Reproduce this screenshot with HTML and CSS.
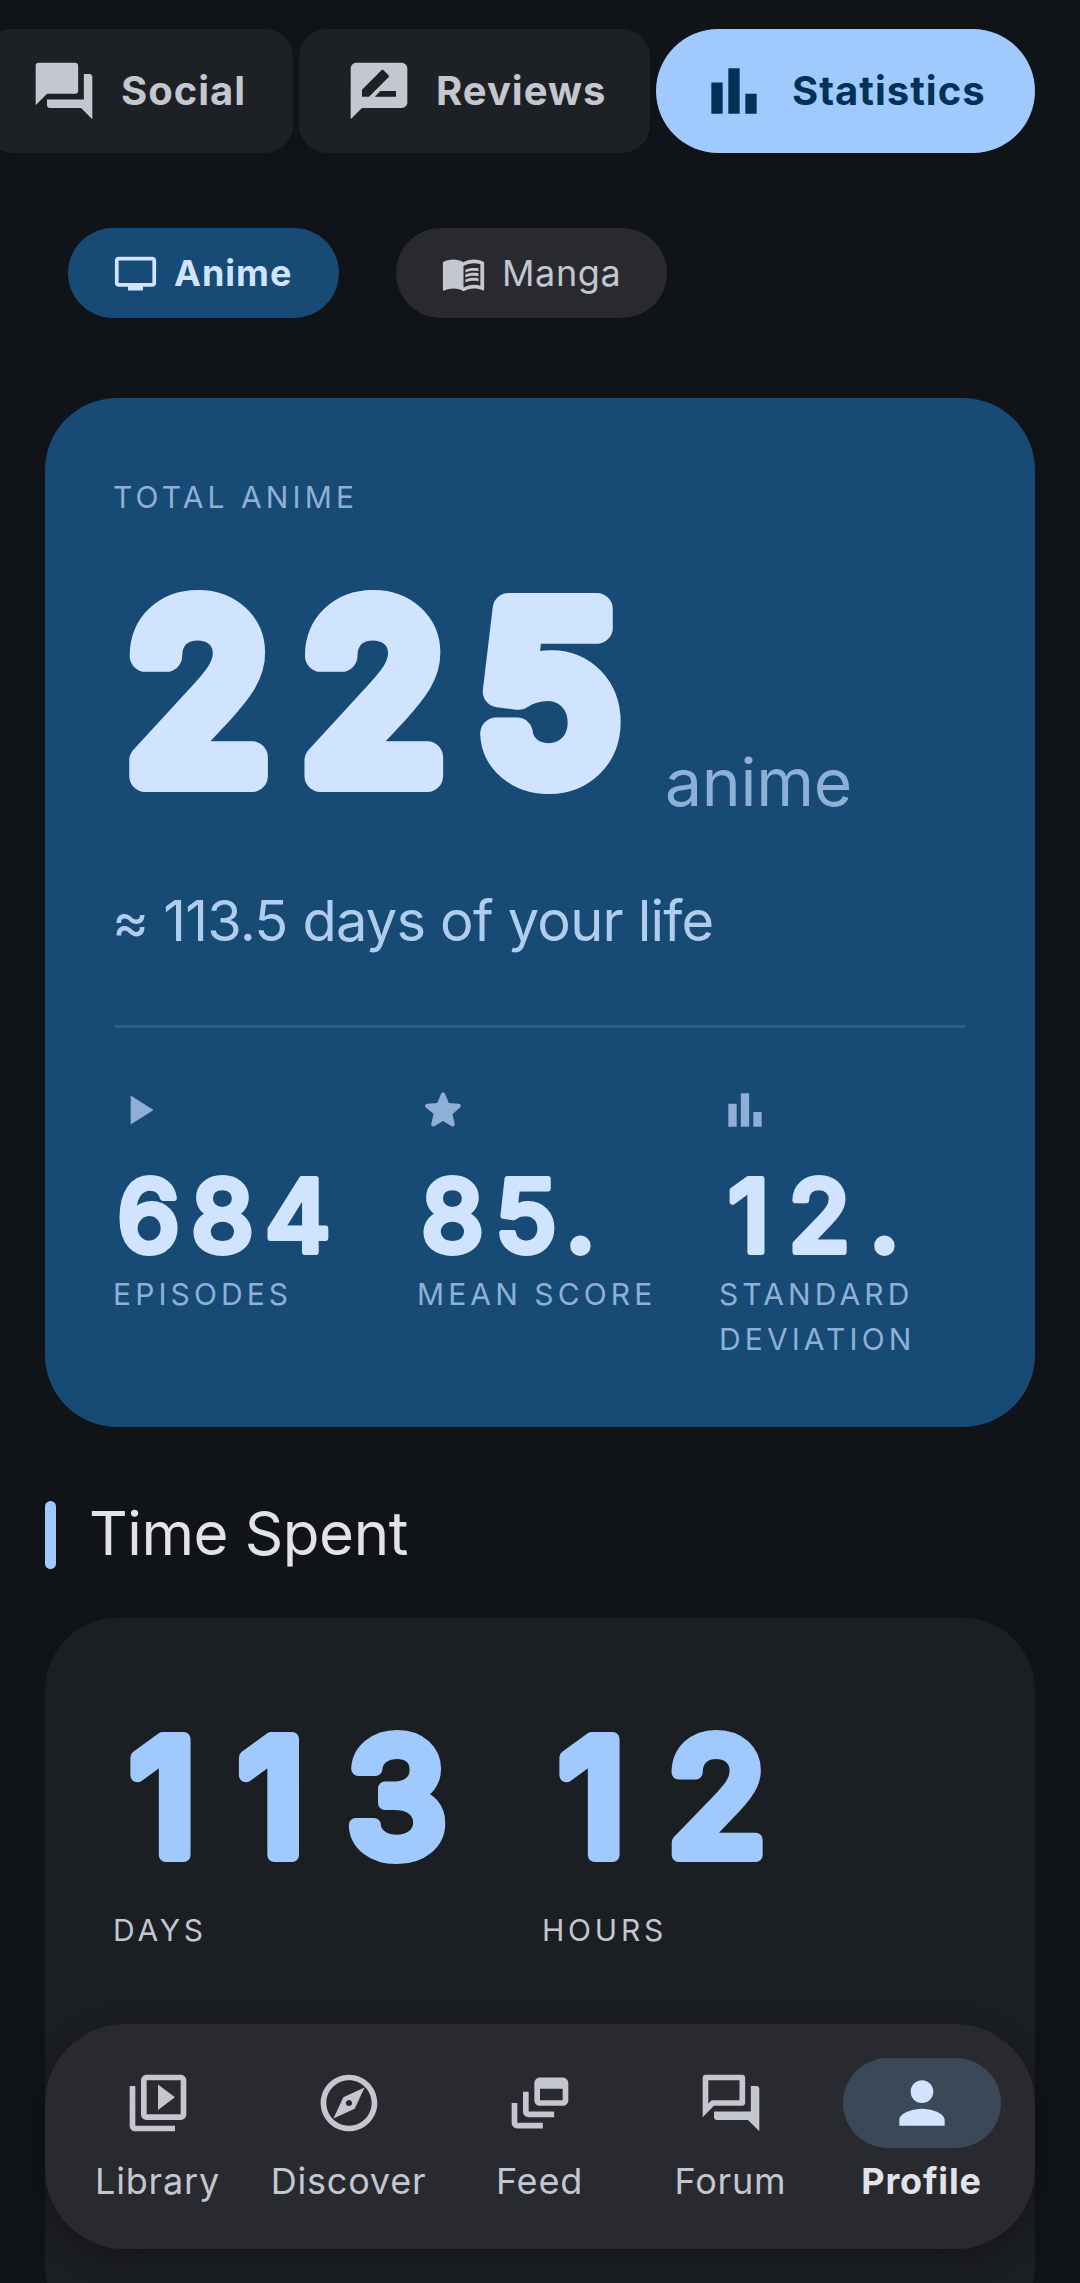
FILE: index.html
```html
<!DOCTYPE html>
<html lang="en">
<head>
    <meta charset="UTF-8">
    <meta name="viewport" content="width=device-width, initial-scale=1.0">
    <title>Statistics</title>
    <link rel="stylesheet" href="styles.css">
</head>
<body>
    <div class="page">
        <div class="tabs">
            <div class="tab tab-social">
                <svg class="icon-lg" viewBox="0 0 24 24"><path d="M21 6h-2v9H6v2c0 .55.45 1 1 1h11l4 4V7c0-.55-.45-1-1-1zm-4 6V3c0-.55-.45-1-1-1H3c-.55 0-1 .45-1 1v14l4-4h10c.55 0 1-.45 1-1z"/></svg>
                <span>Social</span>
            </div>
            <div class="tab tab-reviews">
                <svg class="icon-lg" viewBox="0 0 24 24"><path d="M20 2H4c-1.1 0-1.99.9-1.99 2L2 22l4-4h14c1.1 0 2-.9 2-2V4c0-1.1-.9-2-2-2zM6 14v-2.47l6.88-6.88c.2-.2.51-.2.71 0l1.77 1.77c.2.2.2.51 0 .71L8.47 14H6zm12 0h-7.5l2-2H18v2z"/></svg>
                <span>Reviews</span>
            </div>
            <div class="tab tab-active">
                <svg class="icon-lg" viewBox="0 0 24 24"><path d="M4 9h4v11H4zm12 4h4v7h-4zm-6-9h4v16h-4z"/></svg>
                <span>Statistics</span>
            </div>
        </div>

        <div class="chips">
            <div class="chip chip-active">
                <svg class="icon-sm" viewBox="0 0 24 24"><path d="M21 3H3c-1.1 0-2 .9-2 2v12c0 1.1.9 2 2 2h5v2h8v-2h5c1.1 0 1.99-.9 1.99-2L23 5c0-1.1-.9-2-2-2zm0 14H3V5h18v12z"/></svg>
                <span>Anime</span>
            </div>
            <div class="chip">
                <svg class="icon-sm" viewBox="0 0 24 24"><path d="M21 5c-1.11-.35-2.33-.5-3.5-.5-1.95 0-4.05.4-5.5 1.5-1.45-1.1-3.55-1.5-5.5-1.5S2.45 4.9 1 6v14.65c0 .25.25.5.5.5.1 0 .15-.05.25-.05C3.1 20.45 5.05 20 6.5 20c1.95 0 4.05.4 5.5 1.5 1.35-.85 3.8-1.5 5.5-1.5 1.65 0 3.35.3 4.75 1.05.1.05.15.05.25.05.25 0 .5-.25.5-.5V6c-.6-.45-1.25-.75-2-1zm0 13.5c-1.1-.35-2.3-.5-3.5-.5-1.7 0-4.15.65-5.5 1.5V8c1.35-.85 3.8-1.5 5.5-1.5 1.2 0 2.4.15 3.5.5v11.5z"/><path d="M17.5 10.5c.88 0 1.73.09 2.5.26V9.24c-.79-.15-1.64-.24-2.5-.24-1.7 0-3.24.29-4.5.83v1.66c1.13-.64 2.7-.99 4.5-.99zM13 12.49v1.66c1.13-.64 2.7-.99 4.5-.99.88 0 1.73.09 2.5.26V11.9c-.79-.15-1.64-.24-2.5-.24-1.7 0-3.24.3-4.5.83zM17.5 14.33c-1.7 0-3.24.29-4.5.83v1.66c1.13-.64 2.7-.99 4.5-.99.88 0 1.73.09 2.5.26v-1.52c-.79-.16-1.64-.24-2.5-.24z"/></svg>
                <span>Manga</span>
            </div>
        </div>

        <!-- total card -->
        <div class="hero">
            <div class="hero-label">TOTAL ANIME</div>
            <div class="hero-count">
                <svg class="num-svg hero-num" viewBox="0 0 551 250"><text x="14" y="201">225</text></svg>
                <span class="hero-unit">anime</span>
            </div>
            <div class="hero-sub">≈ 113.5 days of your life</div>
            <div class="hero-line"></div>
            <div class="stats">
                <div class="stat">
                    <svg class="icon-stat" viewBox="0 0 24 24"><path d="M8 5v14l11-7z"/></svg>
                    <svg class="num-svg stat-num" viewBox="0 0 300 137"><text x="3" y="117">684</text></svg>
                    <div class="stat-label">EPISODES</div>
                </div>
                <div class="stat">
                    <svg class="icon-stat" viewBox="0 0 24 24"><path d="M12 17.27l4.15 2.51c.76.46 1.69-.22 1.49-1.08l-1.1-4.72 3.67-3.18c.67-.58.31-1.68-.57-1.75l-4.83-.41-1.89-4.46c-.34-.81-1.5-.81-1.84 0L9.19 8.63l-4.83.41c-.88.07-1.24 1.17-.57 1.75l3.67 3.18-1.1 4.72c-.2.86.73 1.54 1.49 1.08l4.15-2.5z"/></svg>
                    <svg class="num-svg stat-num" viewBox="0 0 300 137"><text x="3" y="117">85.</text></svg>
                    <div class="stat-label">MEAN SCORE</div>
                </div>
                <div class="stat">
                    <svg class="icon-stat" viewBox="0 0 24 24"><path d="M4 9h4v11H4zm12 4h4v7h-4zm-6-9h4v16h-4z"/></svg>
                    <svg class="num-svg stat-num stat-wide" viewBox="0 0 300 137"><text x="8" y="117">12.</text></svg>
                    <div class="stat-label">STANDARD DEVIATION</div>
                </div>
            </div>
        </div>

        <div class="section-head">
            <div class="section-bar"></div>
            <h2>Time Spent</h2>
        </div>

        <div class="time-card">
            <div class="time-grid">
                <div class="time-col">
                    <svg class="num-svg time-num" viewBox="0 0 400 212"><text x="16" y="155">113</text></svg>
                    <div class="time-label">DAYS</div>
                </div>
                <div class="time-col">
                    <svg class="num-svg time-num" viewBox="0 0 400 212"><text x="16" y="155">12</text></svg>
                    <div class="time-label">HOURS</div>
                </div>
            </div>
            <div class="time-more">MINS</div>
        </div>
    </div>

    <!-- floating nav -->
    <nav class="nav">
        <div class="nav-item">
            <div class="nav-icon"><svg class="icon-lg" viewBox="0 0 24 24"><path d="M4 6H2v14c0 1.1.9 2 2 2h14v-2H4V6zm16-4H8c-1.1 0-2 .9-2 2v12c0 1.1.9 2 2 2h12c1.1 0 2-.9 2-2V4c0-1.1-.9-2-2-2zm0 14H8V4h12v12zM12 5.5v9l6-4.5z"/></svg></div>
            <span>Library</span>
        </div>
        <div class="nav-item">
            <div class="nav-icon"><svg class="icon-lg" viewBox="0 0 24 24"><path d="M12 2C6.48 2 2 6.48 2 12s4.48 10 10 10 10-4.48 10-10S17.52 2 12 2zm0 18c-4.41 0-8-3.59-8-8s3.59-8 8-8 8 3.59 8 8-3.59 8-8 8zm-5.5-2.5l7.51-3.49L17.5 6.5 9.99 9.99 6.5 17.5zm5.5-6.6c.61 0 1.1.49 1.1 1.1s-.49 1.1-1.1 1.1-1.1-.49-1.1-1.1.49-1.1 1.1-1.1z"/></svg></div>
            <span>Discover</span>
        </div>
        <div class="nav-item">
            <div class="nav-icon"><svg class="icon-lg" viewBox="0 0 24 24"><path d="M8 8H6v7c0 1.1.9 2 2 2h9v-2H8V8z"/><path d="M20 3h-8c-1.1 0-2 .9-2 2v6c0 1.1.9 2 2 2h8c1.1 0 2-.9 2-2V5c0-1.1-.9-2-2-2zm0 8h-8V7h8v4z"/><path d="M4 12H2v7c0 1.1.9 2 2 2h9v-2H4v-7z"/></svg></div>
            <span>Feed</span>
        </div>
        <div class="nav-item">
            <div class="nav-icon"><svg class="icon-lg" viewBox="0 0 24 24"><path d="M15 4v7H5.17L4 12.17V4h11m1-2H3c-.55 0-1 .45-1 1v14l4-4h10c.55 0 1-.45 1-1V3c0-.55-.45-1-1-1zm5 4h-2v9H6v2c0 .55.45 1 1 1h11l4 4V7c0-.55-.45-1-1-1z"/></svg></div>
            <span>Forum</span>
        </div>
        <div class="nav-item nav-active">
            <div class="nav-icon"><svg class="icon-lg" viewBox="0 0 24 24"><path d="M12 12c2.21 0 4-1.79 4-4s-1.79-4-4-4-4 1.79-4 4 1.79 4 4 4zm0 2c-2.67 0-8 1.34-8 4v2h16v-2c0-2.66-5.33-4-8-4z"/></svg></div>
            <span>Profile</span>
        </div>
    </nav>
</body>
</html>
```
FILE: styles.css
```css
* {
    box-sizing: border-box;
}

html, body {
    margin: 0;
    height: 2283px;
    overflow: hidden;
}

body {
    position: relative;
    background-color: #101418;
    font-family: Inter, "Open Sans", sans-serif;
    color: #c4c6d0;
}

svg {
    fill: currentColor;
    display: block;
    flex-shrink: 0;
}

.icon-lg {
    width: 68px;
    height: 68px;
}

.icon-sm {
    width: 45px;
    height: 45px;
}

.icon-stat {
    width: 50px;
    height: 50px;
}

/* top tabs */
.tabs {
    display: flex;
    gap: 6px;
    margin: 29px 0 0 -16px;
}

.tab {
    display: flex;
    align-items: center;
    gap: 23px;
    height: 124px;
    padding-left: 46px;
    background-color: #1d2024;
    border-radius: 28px;
    font-size: 40px;
    font-weight: 700;
    letter-spacing: 1px;
    white-space: nowrap;
}

.tab span {
    margin-top: -2px;
}

.tab-social {
    width: 309px;
}

.tab-reviews {
    width: 351px;
}

.tab-active {
    width: 379px;
    padding-left: 44px;
    gap: 24px;
    background-color: #a0cafd;
    color: #003258;
    border-radius: 62px;
}

/* anime / manga */
.chips {
    display: flex;
    gap: 57px;
    margin: 75px 0 0 68px;
}

.chip {
    display: flex;
    align-items: center;
    gap: 16px;
    width: 271px;
    height: 90px;
    padding-left: 45px;
    background-color: #282a2f;
    border-radius: 45px;
    font-size: 36px;
    letter-spacing: 0.6px;
}

.chip-active {
    background-color: #174a75;
    color: #d1e4ff;
    font-weight: 700;
    letter-spacing: 1px;
}

/* total card */
.hero {
    margin: 80px 45px 0;
    height: 1029px;
    padding: 82px 69px 0;
    background-color: #174a75;
    border-radius: 72px;
    color: #d1e4ff;
}

.hero-label {
    margin-left: -1px;
    font-size: 30px;
    line-height: 34px;
    letter-spacing: 4.1px;
    color: #8fb0d6;
}

.hero-count {
    display: flex;
    align-items: flex-end;
    margin-top: 61px;
}

.num-svg {
    overflow: visible;
}

.num-svg text {
    font-family: Inter, sans-serif;
    font-weight: 500;
    fill: currentColor;
    stroke: currentColor;
    stroke-linejoin: round;
    stroke-linecap: round;
}

.hero-num {
    width: 551px;
    height: 250px;
}

.hero-num text {
    font-size: 230px;
    font-weight: 400;
    letter-spacing: 35px;
    stroke-width: 32px;
}

.hero-unit {
    margin-bottom: 6px;
    font-size: 66px;
    line-height: 74px;
    letter-spacing: -0.3px;
    color: #8fb0d6;
}

.hero-sub {
    margin-top: 64px;
    margin-left: -2px;
    font-size: 56px;
    line-height: 64px;
    letter-spacing: -0.8px;
    color: #b0cdee;
}

.hero-line {
    height: 3px;
    margin-top: 72px;
    background-color: #2a5d88;
}

.stats {
    display: grid;
    grid-template-columns: 304px 302px 1fr;
    margin-top: 57px;
}

.icon-stat {
    color: #8fb0d6;
}

.stat-num {
    width: 300px;
    height: 137px;
}

.stat-num text {
    font-size: 100px;
    letter-spacing: 11px;
    stroke-width: 6px;
}

.stat-wide text {
    letter-spacing: 19px;
}

.stat-label {
    margin-left: -1px;
    font-size: 30px;
    line-height: 45px;
    letter-spacing: 4.1px;
    color: #8fb0d6;
}

/* time spent */
.section-head {
    display: flex;
    align-items: center;
    gap: 33px;
    margin: 74px 45px 0;
}

.section-bar {
    width: 11px;
    height: 68px;
    background-color: #a0cafd;
    border-radius: 6px;
}

.section-head h2 {
    margin: 0;
    padding-bottom: 3px;
    font-size: 60px;
    line-height: 65px;
    font-weight: 400;
    letter-spacing: -0.4px;
    color: #e2e2e9;
}

.time-card {
    margin: 49px 45px 0;
    height: 720px;
    padding: 82px 69px 0;
    background-color: #1b1e22;
    border-radius: 72px;
}

.time-grid {
    display: grid;
    grid-template-columns: 429px 1fr;
}

.time-num {
    width: 400px;
    height: 212px;
    color: #a0cafd;
}

.time-num text {
    font-size: 160px;
    letter-spacing: 42px;
    stroke-width: 14px;
}

.time-label {
    margin-left: -1px;
    font-size: 30px;
    line-height: 36px;
    letter-spacing: 3.8px;
}

/* only the feet of this row show under the nav */
.time-more {
    margin-top: 278px;
    font-size: 21px;
    line-height: 30px;
    letter-spacing: 3px;
}

/* bottom nav */
.nav {
    position: absolute;
    left: 45px;
    top: 2024px;
    width: 990px;
    height: 225px;
    display: grid;
    grid-template-columns: repeat(5, 191px);
    padding: 34px 17px 0;
    background-color: #282a2f;
    border-radius: 80px;
    box-shadow: 0 8px 30px rgba(0, 0, 0, 0.25);
}

.nav-item {
    display: flex;
    flex-direction: column;
    align-items: center;
    font-size: 36px;
    letter-spacing: 0.8px;
}

.nav-item span {
    margin-top: 11px;
    line-height: 44px;
    white-space: nowrap;
}

.nav-icon {
    display: flex;
    align-items: center;
    justify-content: center;
    width: 158px;
    height: 90px;
    border-radius: 45px;
}

.nav-active .nav-icon {
    background-color: #3a4858;
    color: #d1e4ff;
}

.nav-active span {
    font-weight: 700;
    color: #e2e2e9;
}
```
